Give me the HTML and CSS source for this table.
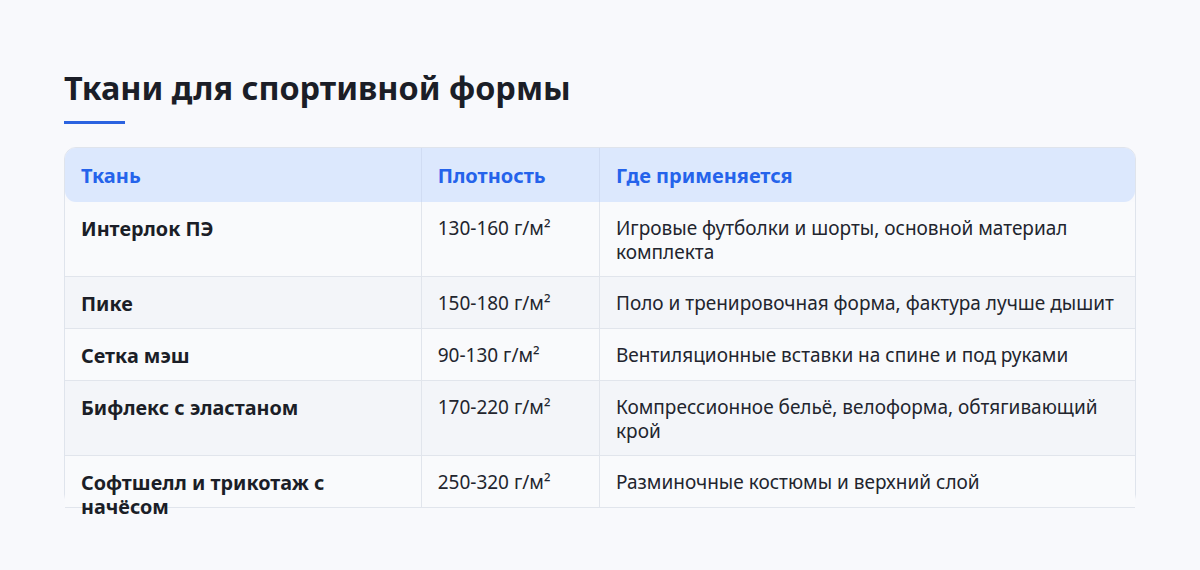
FILE: index.html
```html
<!DOCTYPE html>
<html lang="ru">
<head>
<meta charset="utf-8">
<title>Ткани для спортивной формы</title>
<link rel="stylesheet" href="styles.css">
</head>
<body>
<main class="page">
  <h1 class="title">Ткани для спортивной формы</h1>
  <div class="title-bar"></div>
  <div class="table">
    <div class="row row--head">
      <div class="cell">Ткань</div>
      <div class="cell">Плотность</div>
      <div class="cell">Где применяется</div>
    </div>
    <div class="row">
      <div class="cell cell--name">Интерлок ПЭ</div>
      <div class="cell">130-160 г/м²</div>
      <div class="cell">Игровые футболки и шорты, основной материал комплекта</div>
    </div>
    <div class="row row--alt">
      <div class="cell cell--name">Пике</div>
      <div class="cell">150-180 г/м²</div>
      <div class="cell">Поло и тренировочная форма, фактура лучше дышит</div>
    </div>
    <div class="row">
      <div class="cell cell--name">Сетка мэш</div>
      <div class="cell">90-130 г/м²</div>
      <div class="cell">Вентиляционные вставки на спине и под руками</div>
    </div>
    <div class="row row--alt">
      <div class="cell cell--name">Бифлекс с эластаном</div>
      <div class="cell">170-220 г/м²</div>
      <div class="cell">Компрессионное бельё, велоформа, обтягивающий крой</div>
    </div>
    <div class="row row--short">
      <div class="cell cell--name">Софтшелл и трикотаж с начёсом</div>
      <div class="cell">250-320 г/м²</div>
      <div class="cell">Разминочные костюмы и верхний слой</div>
    </div>
  </div>
</main>
</body>
</html>
```

FILE: styles.css
```css
html, body {
  margin: 0;
  padding: 0;
  background: #f8f9fc;
}

body {
  font-family: "Noto Sans", "Open Sans", sans-serif;
  color: #1b1e27;
}

.page {
  padding: 68px 64px 64px;
}

.title {
  margin: 0;
  font-size: 32.4px;
  line-height: 38px;
  font-weight: 700;
  color: #1b1e27;
}

.title-bar {
  width: 61px;
  height: 3px;
  margin-top: 15px;
  background: #2b63e0;
}

.table {
  margin-top: 23px;
  height: 359px;
  box-sizing: border-box;
  border: 1px solid #dfe4ec;
  border-radius: 12px;
}

.row {
  display: grid;
  grid-template-columns: 2fr 1fr 3fr;
  border-bottom: 1px solid #e1e5ec;
  background: #f9fafc;
}

.row--alt {
  background: #f3f5f9;
}

.row--head {
  background: #dce8fd;
  border-bottom: none;
  border-radius: 11px;
}

.row--short {
  height: 52px;
  box-sizing: border-box;
  grid-template-rows: minmax(0, 1fr);
}

.cell {
  min-height: 0;
  padding: 15px 16px 12px;
  font-size: 19px;
  line-height: 23.6px;
  color: #22252e;
  border-right: 1px solid #e1e5ec;
}

.cell:last-child {
  border-right: none;
}

.row--head .cell {
  padding: 16px 16px 14px;
  font-size: 20px;
  line-height: 24px;
  font-weight: 700;
  color: #2563eb;
  border-right-color: #d0dcf3;
}

.cell--name {
  font-size: 19.8px;
  line-height: 24px;
  font-weight: 700;
  color: #1b1e27;
}
```
